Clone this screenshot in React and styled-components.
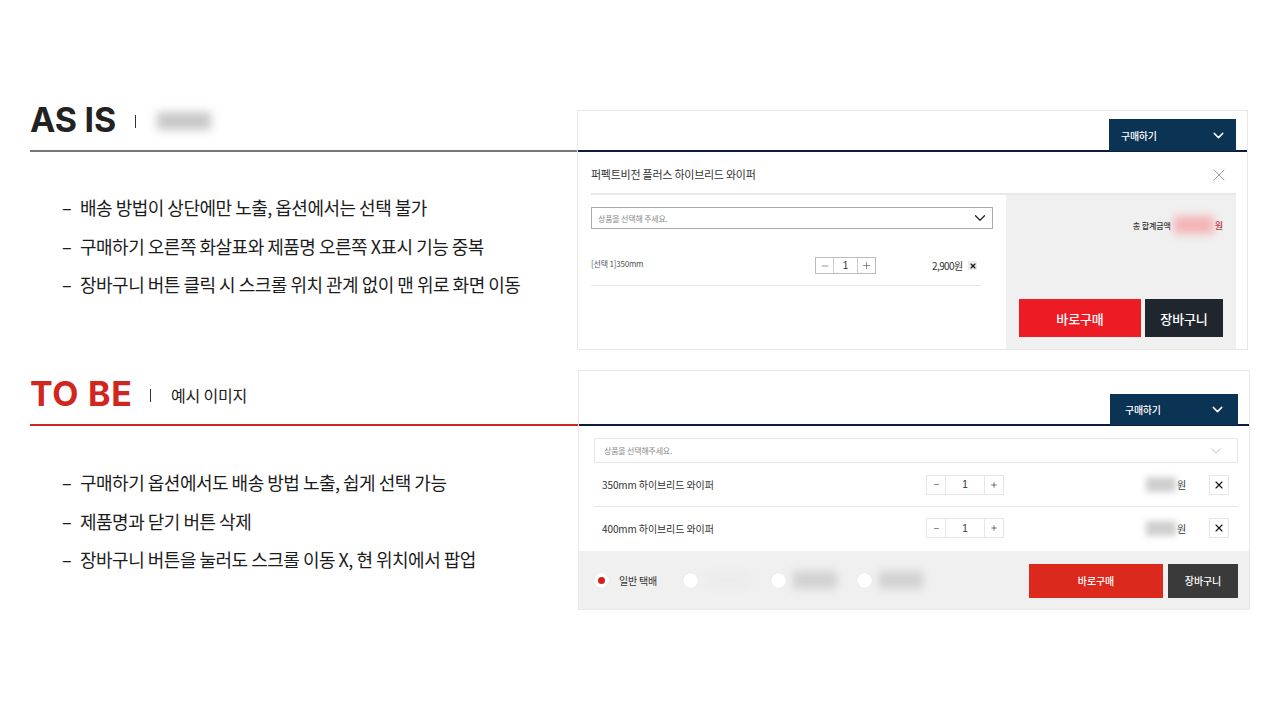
import React from 'react';
import styled, { createGlobalStyle } from 'styled-components';
import { ChevronDown, X, Minus, Plus } from 'lucide-react';

const GlobalStyle = createGlobalStyle`
  html, body { margin: 0; padding: 0; background: #fff; }
  body { font-family: "Noto Sans CJK KR", "Noto Sans", sans-serif; color: #222; }
  * { box-sizing: border-box; }
`;

const Slide = styled.div`
  width: 1280px;
  height: 720px;
  padding: 110px 0 0 30px;
  overflow: hidden;
  display: flex;
  flex-direction: column;
  gap: 20px;
`;

const Section = styled.section`
  display: flex;
  height: 240px;
`;

const Summary = styled.div`
  width: ${({ $width }) => $width}px;
  flex: none;
`;

const Head = styled.div`
  height: ${({ $height }) => $height}px;
  padding-bottom: ${({ $pad }) => $pad}px;
  display: flex;
  align-items: center;
  border-bottom: 2px solid ${({ $line }) => $line};
`;

const Title = styled.h2`
  margin: -3px 0 0;
  width: ${({ $width }) => $width}px;
  flex: none;
  font-family: Inter, sans-serif;
  font-size: 34px;
  font-weight: 700;
  letter-spacing: ${({ $spacing }) => $spacing}px;
  line-height: 40px;
  color: ${({ $color }) => $color};
`;

const Sep = styled.span`
  width: 1px;
  height: 13px;
  background: #333;
`;

const SubTitle = styled.span`
  margin-left: 20px;
  font-size: 16px;
  letter-spacing: -0.2px;
  color: #222;
`;

const BlurBox = styled.span`
  display: block;
  flex: none;
  width: ${({ $w }) => $w}px;
  height: ${({ $h }) => $h}px;
  background: ${({ $color }) => $color || '#c8c8c8'};
  filter: blur(${({ $blur }) => $blur || 4}px);
`;

const HeadBlur = styled(BlurBox)`
  margin-left: 21px;
`;

const Notes = styled.ul`
  list-style: none;
  margin: 0;
  padding: ${({ $top }) => $top}px 0 0 32px;
  display: flex;
  flex-direction: column;
  gap: 13.5px;
`;

const Note = styled.li`
  display: flex;
  font-size: 18px;
  line-height: 25px;
  letter-spacing: -0.5px;
  color: #1c1c1c;
  &::before {
    content: '–';
    width: 18px;
    flex: none;
  }
`;

const Panel = styled.div`
  width: ${({ $width }) => $width}px;
  flex: none;
  border: 1px solid #e8e8e8;
  display: flex;
  flex-direction: column;
`;

const TabBar = styled.div`
  height: ${({ $height }) => $height}px;
  flex: none;
  display: flex;
  justify-content: flex-end;
  align-items: flex-end;
  padding-right: 11px;
  border-bottom: 2px solid #0b1c3c;
`;

const Tab = styled.div`
  width: ${({ $w }) => $w}px;
  height: ${({ $h }) => $h}px;
  margin-bottom: -1px;
  background: #0b3354;
  display: flex;
  align-items: center;
  justify-content: space-between;
  padding: 0 ${({ $right }) => $right}px 0 ${({ $left }) => $left}px;
  color: #fff;
  font-size: 10px;
  font-weight: 500;
  letter-spacing: -0.3px;
`;

const ProductHead = styled.div`
  height: 43px;
  flex: none;
  margin: 0 11px 0 13px;
  padding-top: 3px;
  display: flex;
  align-items: center;
  justify-content: space-between;
  border-bottom: 2px solid #e8e8e8;
  font-size: 11px;
  letter-spacing: -0.25px;
  color: #333;
`;

const CloseIcon = styled(X)`
  margin: 2px 7px 0 0;
  color: #8a8a8a;
`;

const Body = styled.div`
  flex: 1;
  display: flex;
  margin: 0 11px 0 13px;
  min-height: 0;
`;

const OptionCol = styled.div`
  width: 415px;
  flex: none;
  padding-top: 12px;
`;

const SelectBox = styled.div`
  height: ${({ $h }) => $h}px;
  width: ${({ $w }) => ($w ? `${$w}px` : 'auto')};
  display: flex;
  align-items: center;
  justify-content: space-between;
  font-size: ${({ $size }) => $size}px;
  letter-spacing: -0.2px;
  color: #888;
  background: #fff;
  border: ${({ $border }) => $border};
`;

const OldSelect = styled(SelectBox)`
  padding: 0 3px 0 6px;
`;

const OldRow = styled.div`
  width: 390px;
  height: 57px;
  padding: 17px 0 0;
  display: flex;
  align-items: center;
  border-bottom: 1px solid #e6e6e6;
  font-size: 8px;
  letter-spacing: -0.2px;
  color: #555;
`;

const OldName = styled.span`
  width: 224px;
  flex: none;
  margin-top: -4px;
`;

const OldPrice = styled.span`
  margin-left: 56px;
  width: 36px;
  flex: none;
  font-size: 10px;
  letter-spacing: -0.6px;
  color: #333;
`;

const Stepper = styled.div`
  width: ${({ $w }) => $w}px;
  height: ${({ $h }) => $h}px;
  flex: none;
  display: grid;
  grid-template-columns: ${({ $side }) => `${$side}px 1fr ${$side}px`};
  border: 1px solid ${({ $line }) => $line};
  font-family: "Liberation Sans", sans-serif;
  font-size: 10px;
  color: #333;
`;

const StepCell = styled.span`
  display: flex;
  align-items: center;
  justify-content: center;
  border-left: ${({ $line }) => ($line ? `1px solid ${$line}` : 'none')};
  border-right: ${({ $lineR }) => ($lineR ? `1px solid ${$lineR}` : 'none')};
`;

const SmallClose = styled.span`
  width: 9px;
  height: 9px;
  flex: none;
  background: #ececec;
  display: flex;
  align-items: center;
  justify-content: center;
  color: #111;
`;

const TotalCol = styled.div`
  flex: 1;
  background: #f0f0f0;
  display: flex;
  flex-direction: column;
  padding: 18px 13px 12px 13px;
`;

const Total = styled.div`
  display: flex;
  justify-content: flex-end;
  align-items: center;
  font-size: 8px;
  font-weight: 500;
  letter-spacing: -0.1px;
  color: #333;
  height: 24px;
`;

const TotalBlur = styled(BlurBox)`
  margin: 0 1px 0 3px;
`;

const Won = styled.span`
  color: ${({ $color }) => $color};
  font-size: ${({ $size }) => $size}px;
`;

const Actions = styled.div`
  margin-top: auto;
  display: flex;
  gap: ${({ $gap }) => $gap}px;
`;

const Button = styled.div`
  width: ${({ $w }) => $w}px;
  height: ${({ $h }) => $h}px;
  flex: none;
  display: flex;
  align-items: center;
  justify-content: center;
  background: ${({ $bg }) => $bg};
  color: #fff;
  font-size: ${({ $size }) => $size}px;
  font-weight: 500;
  letter-spacing: -0.1px;
`;

const NewBody = styled.div`
  flex: 1;
  padding: 12px 11px 0 15px;
  min-height: 0;
`;

const NewSelect = styled(SelectBox)`
  padding: 0 12px 0 9px;
`;

const NewRow = styled.div`
  height: 43px;
  display: flex;
  align-items: center;
  padding-left: 8px;
  border-top: ${({ $first }) => ($first ? 'none' : '1px solid #e6e6e6')};
  font-size: 10px;
  letter-spacing: -0.1px;
  color: #333;
`;

const NewName = styled.span`
  width: 324px;
  flex: none;
`;

const NewPrice = styled.span`
  width: 182px;
  flex: none;
  display: flex;
  justify-content: flex-end;
  align-items: center;
  font-size: 10px;
`;

const PriceBlur = styled(BlurBox)`
  margin-right: 1px;
`;

const RowClose = styled.span`
  width: 20px;
  height: 20px;
  flex: none;
  margin-left: 23px;
  border: 1px solid #e6e6e6;
  display: flex;
  align-items: center;
  justify-content: center;
  color: #111;
`;

const Footer = styled.div`
  height: 58px;
  flex: none;
  background: #f0f0f0;
  display: flex;
  align-items: center;
  padding: 0 11px 0 15px;
`;

const Radio = styled.span`
  width: 15px;
  height: 15px;
  flex: none;
  border-radius: 50%;
  background: #fff;
  box-shadow: 0 0 1px #ccc;
  display: flex;
  align-items: center;
  justify-content: center;
  margin-left: ${({ $gap }) => $gap || 0}px;
  &::after {
    content: '';
    width: 7px;
    height: 7px;
    border-radius: 50%;
    background: ${({ $on }) => ($on ? '#d81f1c' : 'transparent')};
  }
`;

const RadioLabel = styled.span`
  margin-left: 10px;
  font-size: 10px;
  letter-spacing: -0.2px;
  color: #333;
`;

const RadioBlur = styled(BlurBox)`
  margin-left: 7px;
`;

const FooterActions = styled(Actions)`
  margin: 1px 0 0 auto;
`;

const asIsNotes = [
  '배송 방법이 상단에만 노출, 옵션에서는 선택 불가',
  '구매하기 오른쪽 화살표와 제품명 오른쪽 X표시 기능 중복',
  '장바구니 버튼 클릭 시 스크롤 위치 관계 없이 맨 위로 화면 이동',
];

const toBeNotes = [
  '구매하기 옵션에서도 배송 방법 노출, 쉽게 선택 가능',
  '제품명과 닫기 버튼 삭제',
  '장바구니 버튼을 눌러도 스크롤 이동 X, 현 위치에서 팝업',
];

const NewStepper = () => (
  <Stepper $w={78} $h={20} $side={19} $line="#e6e6e6">
    <StepCell $lineR="#e6e6e6"><Minus size={7} strokeWidth={2} /></StepCell>
    <StepCell>1</StepCell>
    <StepCell $line="#e6e6e6"><Plus size={8} strokeWidth={2} /></StepCell>
  </Stepper>
);

const NewItem = ({ name, first }) => (
  <NewRow $first={first}>
    <NewName>{name}</NewName>
    <NewStepper />
    <NewPrice>
      <PriceBlur $w={30} $h={15} $color="#cfcfcf" $blur={3} />원
    </NewPrice>
    <RowClose><X size={12} strokeWidth={2.2} /></RowClose>
  </NewRow>
);

const App = () => (
  <>
    <GlobalStyle />
    <Slide>
      <Section>
        <Summary $width={547}>
          <Head $height={42} $pad={18} $line="#777">
            <Title $width={105} $spacing={-0.2} $color="#222">AS IS</Title>
            <Sep />
            <HeadBlur $w={54} $h={18} $blur={5} />
          </Head>
          <Notes $top={43}>
            {asIsNotes.map((text) => <Note key={text}>{text}</Note>)}
          </Notes>
        </Summary>
        <Panel $width={671}>
          <TabBar $height={41}>
            <Tab $w={127} $h={32} $left={12} $right={9}>구매하기<ChevronDown size={17} strokeWidth={2} /></Tab>
          </TabBar>
          <ProductHead>
            퍼펙트비전 플러스 하이브리드 와이퍼
            <CloseIcon size={20} strokeWidth={1} />
          </ProductHead>
          <Body>
            <OptionCol>
              <OldSelect $w={402} $h={22} $size={8} $border="1px solid #aaa">
                상품을 선택해 주세요.
                <ChevronDown size={18} strokeWidth={1.6} color="#222" />
              </OldSelect>
              <OldRow>
                <OldName>[선택 1]350mm</OldName>
                <Stepper $w={61} $h={17} $side={18} $line="#bbb">
                  <StepCell $lineR="#ccc"><Minus size={10} strokeWidth={1.2} /></StepCell>
                  <StepCell>1</StepCell>
                  <StepCell $line="#ccc"><Plus size={11} strokeWidth={1.2} /></StepCell>
                </Stepper>
                <OldPrice>2,900원</OldPrice>
                <SmallClose><X size={8} strokeWidth={3.5} /></SmallClose>
              </OldRow>
            </OptionCol>
            <TotalCol>
              <Total>
                총 합계금액
                <TotalBlur $w={40} $h={18} $color="#f4b4b6" />
                <Won $color="#b3262a" $size={9}>원</Won>
              </Total>
              <Actions $gap={4}>
                <Button $w={122} $h={38} $bg="#ed1c24" $size={13}>바로구매</Button>
                <Button $w={78} $h={38} $bg="#20262e" $size={13}>장바구니</Button>
              </Actions>
            </TotalCol>
          </Body>
        </Panel>
      </Section>
      <Section>
        <Summary $width={548}>
          <Head $height={56} $pad={4} $line="#d0261e">
            <Title $width={120} $spacing={0.7} $color="#d0261e">TO BE</Title>
            <Sep />
            <SubTitle>예시 이미지</SubTitle>
          </Head>
          <Notes $top={44}>
            {toBeNotes.map((text) => <Note key={text}>{text}</Note>)}
          </Notes>
        </Summary>
        <Panel $width={672}>
          <TabBar $height={55}>
            <Tab $w={128} $h={31} $left={15} $right={12}>구매하기<ChevronDown size={17} strokeWidth={2} /></Tab>
          </TabBar>
          <NewBody>
            <NewSelect $h={25} $size={8} $border="1px solid #e6e6e6">
              상품을 선택해주세요.
              <ChevronDown size={18} strokeWidth={1} color="#aaa" />
            </NewSelect>
            <NewItem name="350mm 하이브리드 와이퍼" first />
            <NewItem name="400mm 하이브리드 와이퍼" />
          </NewBody>
          <Footer>
            <Radio $on />
            <RadioLabel>일반 택배</RadioLabel>
            <Radio $gap={26} />
            <RadioBlur $w={44} $h={18} $color="#ececec" />
            <Radio $gap={22} />
            <RadioBlur $w={44} $h={18} $color="#d2d2d2" />
            <Radio $gap={20} />
            <RadioBlur $w={44} $h={18} $color="#d2d2d2" />
            <FooterActions $gap={5}>
              <Button $w={134} $h={34} $bg="#dc291e" $size={10}>바로구매</Button>
              <Button $w={70} $h={34} $bg="#3a3a3a" $size={10}>장바구니</Button>
            </FooterActions>
          </Footer>
        </Panel>
      </Section>
    </Slide>
  </>
);

export default App;
